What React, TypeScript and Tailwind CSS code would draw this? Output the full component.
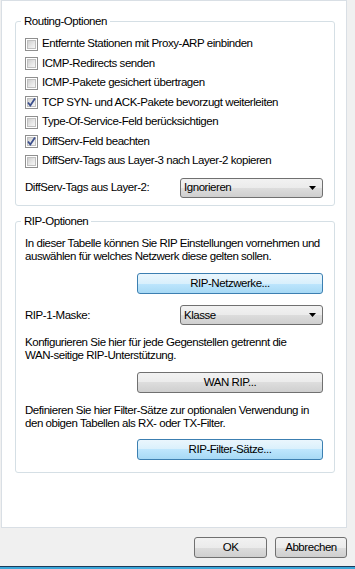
import React from "react"

const grayBtn =
  "bg-[linear-gradient(to_bottom,#f2f2f2_0%,#ebebeb_50%,#dddddd_50%,#cfcfcf_100%)] border-[#707070]"
const blueBtn =
  "bg-[linear-gradient(to_bottom,#eaf6fd_0%,#d9f0fc_50%,#bee6fd_50%,#a7d9f5_100%)] border-[#3c7fb1]"

function Checkbox({ checked, label, h }: { checked?: boolean; label: string; h: string }) {
  return (
    <div className={`flex items-center ${h}`}>
      <span className="flex h-[13px] w-[13px] shrink-0 items-center justify-center border border-[#8f8f8f] bg-white">
        <span className="relative flex h-[9px] w-[9px] items-center justify-center border border-[#c0c0c0] bg-[linear-gradient(135deg,#cfcfcf_0%,#e9e9e9_60%,#f6f6f6_100%)]">
          {checked && (
            <svg width="11" height="11" viewBox="0 0 11 11" className="absolute left-[-2px] top-[-2px]">
              <path d="M2 5.5 L4.3 8.5 L9 1.5" fill="none" stroke="#3c4f8c" strokeWidth="1.8" />
            </svg>
          )}
        </span>
      </span>
      <span className="ml-[4px]">{label}</span>
    </div>
  )
}

function Select({ value }: { value: string }) {
  return (
    <div
      className={`flex h-[20px] w-[143px] items-center justify-between rounded-[3px] border pl-[3px] pr-[6px] ${grayBtn}`}
    >
      <span>{value}</span>
      <svg width="7" height="4" viewBox="0 0 7 4">
        <path d="M0 0 H7 L3.5 4 Z" fill="#000" />
      </svg>
    </div>
  )
}

function Button({ label, blue, w }: { label: string; blue?: boolean; w: string }) {
  return (
    <div
      className={`flex h-[21px] ${w} items-center justify-center rounded-[3px] border ${blue ? blueBtn : grayBtn}`}
    >
      {label}
    </div>
  )
}

export default function App() {
  return (
    <div className="flex h-[569px] w-[355px] flex-col whitespace-nowrap bg-[#f0f0f0] font-['Liberation_Sans',Arial,sans-serif] text-[11.5px] tracking-[-0.45px] text-black">
      {/* Content panel */}
      <div className="ml-[1px] flex h-[528px] w-[346px] flex-col border border-[#d9dfe5] bg-white pl-[13px] pt-[13px]">
        {/* Routing-Optionen */}
        <fieldset className="w-[320px] rounded-[3px] border border-[#d5dfe5] pl-[5px] pr-[11px] pb-[7px]">
          <legend className="px-[3px] leading-[14px]">Routing-Optionen</legend>
          <div className="flex flex-col pl-[4px] pt-[6px]">
            <Checkbox h="h-[20px]" label="Entfernte Stationen mit Proxy-ARP einbinden" />
            <Checkbox h="h-[19px]" label="ICMP-Redirects senden" />
            <Checkbox h="h-[20px]" label="ICMP-Pakete gesichert übertragen" />
            <Checkbox h="h-[19px]" checked label="TCP SYN- und ACK-Pakete bevorzugt weiterleiten" />
            <Checkbox h="h-[20px]" label="Type-Of-Service-Feld berücksichtigen" />
            <Checkbox h="h-[19px]" checked label="DiffServ-Feld beachten" />
            <Checkbox h="h-[20px]" label="DiffServ-Tags aus Layer-3 nach Layer-2 kopieren" />
            <div className="mt-[7px] flex items-center justify-between">
              <span>DiffServ-Tags aus Layer-2:</span>
              <Select value="Ignorieren" />
            </div>
          </div>
        </fieldset>

        {/* RIP-Optionen */}
        <fieldset className="mt-[8px] w-[320px] rounded-[3px] border border-[#d5dfe5] pl-[5px] pr-[11px] pb-[12px]">
          <legend className="px-[3px] leading-[14px]">RIP-Optionen</legend>
          <div className="flex flex-col pl-[4px] pt-[9px] leading-[13px]">
            <p>
              In dieser Tabelle können Sie RIP Einstellungen vornehmen und
              <br />
              auswählen für welches Netzwerk diese gelten sollen.
            </p>
            <div className="mt-[10px] flex justify-end">
              <Button blue w="w-[186px]" label="RIP-Netzwerke..." />
            </div>
            <div className="mt-[11px] flex items-center justify-between">
              <span>RIP-1-Maske:</span>
              <Select value="Klasse" />
            </div>
            <p className="mt-[11px]">
              Konfigurieren Sie hier für jede Gegenstellen getrennt die
              <br />
              WAN-seitige RIP-Unterstützung.
            </p>
            <div className="mt-[10px] flex justify-end">
              <Button w="w-[186px]" label="WAN RIP..." />
            </div>
            <p className="mt-[11px]">
              Definieren Sie hier Filter-Sätze zur optionalen Verwendung in
              <br />
              den obigen Tabellen als RX- oder TX-Filter.
            </p>
            <div className="mt-[9px] flex justify-end">
              <Button blue w="w-[186px]" label="RIP-Filter-Sätze..." />
            </div>
          </div>
        </fieldset>
      </div>

      {/* Dialog buttons */}
      <div className="mt-[9px] flex justify-end gap-[8px] pr-[8px]">
        <Button w="w-[73px]" label="OK" />
        <Button w="w-[72px]" label="Abbrechen" />
      </div>

      <div className="mt-auto h-[1px] bg-[#1c3a5a]" />
      <div className="h-[2px] bg-[#3aa6d8]" />
    </div>
  )
}
